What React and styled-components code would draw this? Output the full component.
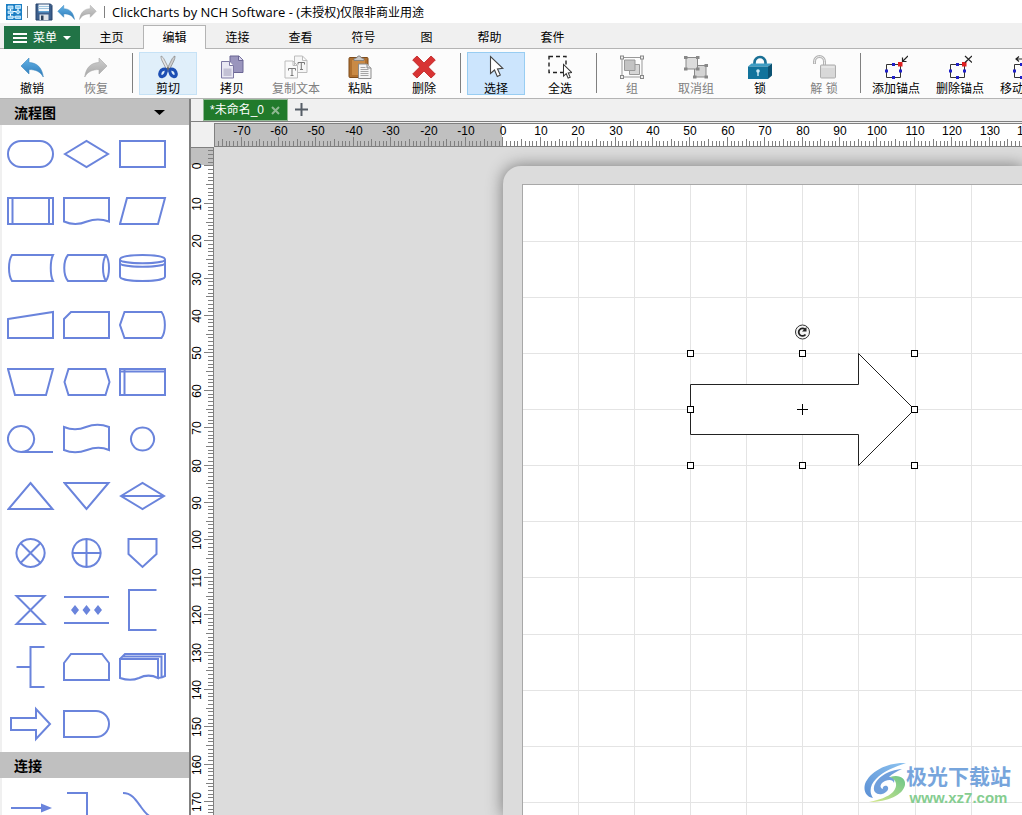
import React, { useEffect, useState } from "react";
import styled, { createGlobalStyle } from "styled-components";

const GlobalStyle = createGlobalStyle`
  *, *::before, *::after { box-sizing: border-box; }
  html, body { margin: 0; height: 100%; }
  body {
    overflow: hidden;
    background: #f0f0f0;
    color: #000;
    font-family: "Liberation Sans", "Noto Sans CJK SC", sans-serif;
    font-size: 12px;
  }
  button { font: inherit; color: inherit; padding: 0; margin: 0; border: 0; background: none; }
  svg { display: block; flex: none; }
`;

const Window = styled.div`
  display: flex;
  flex-direction: column;
  height: 100vh;
  overflow: hidden;
`;

/* ---------- title bar ---------- */

const TitleBar = styled.header`
  display: flex;
  align-items: center;
  height: 23px;
  padding-left: 6px;
  background: #fff;
  flex: none;
`;

const QuickButton = styled.button`
  display: flex;
  margin-right: ${(p) => p.$gap}px;
`;

const TitleDivider = styled.span`
  width: 1px;
  height: 12px;
  margin-right: 7px;
  margin-left: ${(p) => p.$before}px;
  background: #808080;
`;

const Title = styled.h1`
  margin: 2px 0 0;
  font: 400 13px/20px "Open Sans", "Noto Sans CJK SC", sans-serif;
  white-space: nowrap;
`;

const TitleNote = styled.span`
  font-size: 12px;
`;

/* ---------- ribbon tabs ---------- */

const TabStrip = styled.nav`
  display: flex;
  align-items: flex-end;
  height: 26px;
  padding-left: 4px;
  border-bottom: 1px solid #b4b4b4;
  background: #f0f0f0;
  flex: none;
`;

const MenuButton = styled.button`
  display: flex;
  align-items: center;
  gap: 6px;
  width: 76px;
  height: 23px;
  padding-left: 9px;
  margin-bottom: -1px;
  background: #217346;
  color: #fff;
  line-height: 22px;
`;

const RibbonTab = styled.button`
  width: 63px;
  height: 24px;
  line-height: 22px;
  margin-bottom: -1px;
  border: 1px solid transparent;
  border-bottom: 0;
  ${(p) => p.$active && `background: #fcfcfc; border-color: #b4b4b4;`}
`;

/* ---------- ribbon ---------- */

const Ribbon = styled.div`
  display: flex;
  height: 50px;
  padding-top: 3px;
  border-bottom: 1px solid #b4b4b4;
  background: #fcfcfc;
  overflow: hidden;
  flex: none;
`;

const tones = {
  plain: "background: transparent; border-color: transparent;",
  hover: "background: #e0effa; border-color: #c6e2f6;",
  pressed: "background: #cce5fd; border-color: #98cdf2;",
};

const ToolButton = styled.button`
  display: flex;
  flex-direction: column;
  align-items: center;
  flex: none;
  width: 58px;
  height: 43px;
  margin: 0 3px;
  padding-top: 2px;
  border: 1px solid;
  ${(p) => tones[p.$tone || "plain"]}
  color: #000;
  &:disabled { color: #808080; }
`;

const ToolLabel = styled.span`
  margin-top: 2px;
  line-height: 16px;
  white-space: nowrap;
`;

const ToolDivider = styled.span`
  flex: none;
  width: 1px;
  height: 40px;
  margin: 1px 3px 0 4px;
  background: #808080;
`;

/* ---------- body ---------- */

const Body = styled.div`
  display: flex;
  flex: 1;
  min-height: 0;
`;

const Sidebar = styled.aside`
  flex: none;
  width: 191px;
  border-right: 2px solid #808080;
  background: #fff;
  overflow: hidden;
`;

const SectionHeader = styled.h2`
  display: flex;
  align-items: center;
  justify-content: space-between;
  height: 26px;
  margin: 0;
  padding: 0 24px 0 14px;
  background: #c0c0c0;
  font: 700 14px/26px "Noto Sans CJK SC", sans-serif;
`;

const ShapeGrid = styled.div`
  display: grid;
  grid-template-columns: repeat(3, 48px);
  grid-auto-rows: 48px;
  gap: 9px 8px;
  padding: 5px 0 4px 5px;
  border-left: 2px solid #f0f0f0;
`;

const ShapeButton = styled.button`
  display: block;
  width: 48px;
  height: 48px;
  & path {
    fill: none;
    stroke: #6a84dc;
    stroke-width: 2;
  }
  & .solid { fill: #6a84dc; stroke: none; }
`;

const Main = styled.main`
  display: flex;
  flex-direction: column;
  flex: 1;
  min-width: 0;
`;

const DocStrip = styled.div`
  display: flex;
  align-items: flex-end;
  height: 23px;
  padding-left: 12px;
  margin-bottom: 1px;
  border-bottom: 1px solid #808080;
  flex: none;
`;

const DocTab = styled.div`
  display: flex;
  align-items: center;
  justify-content: space-between;
  width: 85px;
  height: 22px;
  padding: 0 7px 0 6px;
  border: 1px solid #8fb892;
  background: #217a2b;
  color: #fff;
  line-height: 20px;
  white-space: nowrap;
`;

const AddTab = styled.button`
  display: flex;
  margin: 0 0 5px 7px;
`;

const Desk = styled.div`
  display: grid;
  grid-template-columns: 23px minmax(0, 1fr);
  grid-template-rows: 24px minmax(0, 1fr);
  flex: 1;
  min-height: 0;
`;

const RulerBox = styled.div`
  overflow: hidden;
  background: #fff;
  & text {
    font: 12px "Liberation Sans", sans-serif;
    text-anchor: middle;
  }
`;

const Workspace = styled.div`
  display: flex;
  padding: 19px 0 0 289px;
  background: #dcdcdc;
  overflow: hidden;
`;

const PageFrame = styled.div`
  display: flex;
  flex: 1;
  min-width: 0;
  padding: 18px 0 0 19px;
  border-radius: 18px 0 0 0;
  background: #dcdcdc;
  box-shadow: 0 0 16px 1px #808080;
`;

const Paper = styled.div`
  flex: 1;
  min-width: 0;
  border: solid #a8a8a8;
  border-width: 1px 0 0 1px;
  background: #fff;
  overflow: hidden;
`;

const Watermark = styled.a`
  position: absolute;
  right: 11px;
  bottom: 9px;
  display: flex;
  align-items: center;
  text-decoration: none;
`;

const WatermarkText = styled.span`
  display: flex;
  flex-direction: column;
  align-items: center;
`;

const WatermarkName = styled.span`
  font: 700 21px/30px "Noto Sans CJK SC", sans-serif;
  color: #77a5dc;
`;

const WatermarkSite = styled.span`
  font: 700 15px/16px "Liberation Sans", sans-serif;
  color: #85cd90;
`;

/* ---------- icons ---------- */

const UndoIcon = ({ size = 24, gray }) => (
  <svg width={size} height={size} viewBox="0 0 24 24">
    <defs>
      <linearGradient id={gray ? "ug" : "ub"} x1="0" y1="0" x2="0" y2="1">
        <stop offset="0" stopColor={gray ? "#cfcfcf" : "#62b2e6"} />
        <stop offset="1" stopColor={gray ? "#a6a6a6" : "#2c79b8"} />
      </linearGradient>
    </defs>
    <path
      transform={gray ? "translate(24 0) scale(-1 1)" : undefined}
      fill={gray ? "url(#ug)" : "url(#ub)"}
      stroke={gray ? "#a8a8a8" : "#3d86bd"}
      strokeWidth="0.6"
      d="M1 11 9 3v4.500c8 .3 13 5 14.300 14.500C20 16.500 16 14.600 9 14.500V19z"
    />
  </svg>
);

const AppIcon = () => (
  <svg width="16" height="16" viewBox="0 0 16 16">
    <rect width="16" height="16" fill="#1c7fc4" />
    <path d="M4.500 4v9M4.500 7.500h7M12 3v7M4.500 13h5" stroke="#fff" fill="none" />
    <path d="M2 2h5v3H2zM9.500 1.500h5v3h-5zM2 7h5v2.500H2zM12 6l2.500 2L12 10 9.500 8zM2 12h5v2.500H2zM9.500 12h5v2.500h-5z" fill="#8fd0f5" stroke="#e8f6ff" strokeWidth="0.7" />
  </svg>
);

const SaveIcon = () => (
  <svg width="18" height="18" viewBox="0 0 18 18">
    <path d="M1 1h14.500L17 2.500V17H1z" fill="#3d5f8c" stroke="#27436b" />
    <path d="M3.500 1.500h10.500V8H3.500z" fill="#f4f7fa" />
    <path d="M3.500 3.500H14M3.500 5.500H14" stroke="#9dc4de" />
    <path d="M3.500 8H14v1.500H3.500z" fill="#5e9fd0" />
    <path d="M4.500 11.500h9V17h-9z" fill="#dfe3e8" />
    <path d="M6 12.500h2.500V17H6z" fill="#2c3f59" />
  </svg>
);

const CutIcon = () => (
  <svg width="24" height="24" viewBox="0 0 24 24">
    <path d="M5 1c2 1 2.500 2 3.500 4l5 10-2 1.500L6.200 6C5.300 4 5 3 5 1z" fill="#e4e4e4" stroke="#909090" strokeWidth="0.8" />
    <path d="M19 1c-2 1-2.500 2-3.500 4l-5 10 2 1.500L17.800 6c.9-2 1.200-3 1.200-5z" fill="#cfcfcf" stroke="#8a8a8a" strokeWidth="0.8" />
    <path d="M10.300 14.600c-1.800-.9-4.800-.4-6 2.300-1.200 2.800-.2 5 1.800 4.800 2.500-.3 4.400-3.600 4.200-7.100zM13.700 14.600c1.800-.9 4.800-.4 6 2.300 1.200 2.800.2 5-1.800 4.800-2.500-.3-4.400-3.600-4.200-7.100z" fill="none" stroke="#1d4fb4" strokeWidth="3.200" />
    <circle cx="12" cy="13.500" r="1.300" fill="#666" />
  </svg>
);

const CopyIcon = () => (
  <svg width="24" height="24" viewBox="0 0 24 24">
    <path d="M10 1h9l4 4v12.500H10z" fill="#9a95bd" stroke="#6b6694" />
    <path d="M18.500 1v4.500H23" fill="#dcdaf0" stroke="#6b6694" />
    <path d="M1.500 6.500h8l4 4V23h-12z" fill="#e9e8f3" stroke="#7c78a3" />
    <path d="M9.500 6.500v4h4" fill="#fff" stroke="#7c78a3" />
    <path d="M3.500 13.500h8V21h-8z" fill="#c3c1d5" />
  </svg>
);

const CopyTextIcon = () => (
  <svg width="24" height="24" viewBox="0 0 24 24">
    <path d="M10.500 1h8l4.500 4.500v12H10.500zM18.500 1v4.500H23" fill="#f6f6f6" stroke="#bcbcbc" />
    <path d="M1 6h8l4.500 4.500V23H1zM9 6v4.500h4.500" fill="#fafafa" stroke="#bcbcbc" />
    <path d="M4.500 15.500v-2h7v2M8 13.500v7M6.500 20.500h3" stroke="#777" fill="none" />
    <path d="M14 9.500v-2h6.500v2M17.300 7.500v7M16 14.500h3" stroke="#777" fill="none" />
  </svg>
);

const PasteIcon = () => (
  <svg width="24" height="24" viewBox="0 0 24 24">
    <rect x="1" y="2.500" width="19" height="20" rx="1" fill="#b0702f" stroke="#7d4b1b" />
    <path d="M4 5h13v15H4z" fill="#c98a45" />
    <path d="M6 5.500V3.500L8.500 3 10 1h2l1.500 2 2.500.5v2z" fill="#c9c9c9" stroke="#7b7b7b" strokeWidth="0.8" />
    <path d="M10.500 9h8.500l4 4v10.500H10.500z" fill="#f5f5f5" stroke="#8b8b8b" />
    <path d="M19 9v4h4" fill="#ddd" stroke="#8b8b8b" />
    <path d="M12.500 12.500h5M12.500 14.500h8M12.500 16.500h8M12.500 18.500h8M12.500 20.500h8" stroke="#a5a5a5" />
  </svg>
);

const DeleteIcon = () => (
  <svg width="24" height="24" viewBox="0 0 24 24">
    <path d="M5 1 12 8 19 1 23.300 5 16.300 12 23.300 19 19 23 12 16 5 23 .700 19 7.700 12 .700 5z" fill="#d83434" stroke="#bd2020" strokeWidth="0.8" strokeLinejoin="round" />
  </svg>
);

const POINTER = "M0 0v17l4-3.500 2.800 6.500 3-1.400-2.800-6.200 5.300-.6z";

const SelectIcon = () => (
  <svg width="24" height="24" viewBox="0 0 24 24">
    <path transform="translate(6.500 1.500)" d={POINTER} fill="#fff" stroke="#444" strokeWidth="1.100" />
  </svg>
);

const SelectAllIcon = () => (
  <svg width="24" height="24" viewBox="0 0 24 24">
    <path d="M1 1.500h17v16H1z" fill="none" stroke="#222" strokeWidth="1.400" strokeDasharray="4 3" />
    <g transform="translate(15.500 9.500) scale(.68)">
      <path d={POINTER} fill="#fff" stroke="#333" strokeWidth="1.500" />
    </g>
  </svg>
);

const GroupIcon = () => (
  <svg width="24" height="24" viewBox="0 0 24 24">
    <path d="M2 2.500h20v19.500H2z" fill="none" stroke="#999" />
    <path d="M9.500 9.500h10v10h-10z" fill="#d6d6d6" stroke="#999" />
    <path d="M4.500 5h10.500v10.500H4.500z" fill="#c3c3c3" stroke="#999" />
    <g fill="#eee" stroke="#888">
      <rect x=".5" y="1" width="3" height="3" /><rect x="20.500" y="1" width="3" height="3" />
      <rect x=".5" y="20.500" width="3" height="3" /><rect x="20.500" y="20.500" width="3" height="3" />
    </g>
  </svg>
);

const UngroupIcon = () => (
  <svg width="24" height="24" viewBox="0 0 24 24">
    <path d="M10.500 10.500h11.500V22H10.500z" fill="#d4d4d4" stroke="#888" />
    <path d="M2 2.500h11.500V14H2z" fill="#dcdcdc" stroke="#888" />
    <path d="M0 1h3.500v3H0zM12 1h3.500v3H12zM0 12.500h3.500v3H0zM12 12.500h3.500v3H12zM20.500 9H24v3h-3.500zM9 20.500h3.500v3H9zM20.500 20.500H24v3h-3.500z" fill="#888" />
  </svg>
);

const LockIcon = () => (
  <svg width="26" height="24" viewBox="0 0 26 24">
    <path d="M7.500 10V7.500a5.500 5.500 0 0 1 11 0V10" fill="none" stroke="#1a7095" strokeWidth="2.700" />
    <path d="M1 11.500 4.500 8.500H25l-4 3z" fill="#3e9dc4" />
    <path d="M21 11.500l4-3v12L21 24z" fill="#0b5273" />
    <path d="M1 11.500h20V24H1z" fill="#11739c" />
    <circle cx="11" cy="16" r="1.800" fill="#cdeaf6" /><path d="M10.300 16h1.400v5h-1.400z" fill="#cdeaf6" />
  </svg>
);

const UnlockIcon = () => (
  <svg width="24" height="24" viewBox="0 0 24 24">
    <path d="M2.500 9V6.500a5 5 0 0 1 10 0V10" fill="none" stroke="#b3b3b3" strokeWidth="3" />
    <path d="M2.500 8.500v-2a5 5 0 0 1 10 0V10" fill="none" stroke="#ececec" />
    <rect x="8.500" y="10" width="15" height="13" rx="1" fill="#d8d8d8" stroke="#adadad" />
    <path d="M9.500 12h13" stroke="#f2f2f2" />
  </svg>
);

const AnchorIcon = ({ mark }) => (
  <svg width="24" height="24" viewBox="0 0 24 24">
    <path d="M2.500 9.500h14v13h-14z" fill="none" stroke="#333" />
    <path d="M8 8h3v3H8zM8 21h3v3H8zM1 14.500h3v3H1zM15 14.500h3v3h-3z" fill="#2020c8" />
    <path d="M14 7h4.500v4.500H14z" fill="#e02020" />
    <path d={mark} fill="none" stroke="#222" strokeWidth="1.200" />
  </svg>
);

const tools = [
  { label: "撤销", icon: <UndoIcon /> },
  { label: "恢复", icon: <UndoIcon gray />, disabled: true },
  null,
  { label: "剪切", icon: <CutIcon />, tone: "hover" },
  { label: "拷贝", icon: <CopyIcon /> },
  { label: "复制文本", icon: <CopyTextIcon />, disabled: true },
  { label: "粘贴", icon: <PasteIcon /> },
  { label: "删除", icon: <DeleteIcon /> },
  null,
  { label: "选择", icon: <SelectIcon />, tone: "pressed" },
  { label: "全选", icon: <SelectAllIcon /> },
  null,
  { label: "组", icon: <GroupIcon />, disabled: true },
  { label: "取消组", icon: <UngroupIcon />, disabled: true },
  { label: "锁", icon: <LockIcon /> },
  { label: "解 锁", icon: <UnlockIcon />, disabled: true },
  null,
  { label: "添加锚点", icon: <AnchorIcon mark="M24 1 18.500 6.500M18.500 2.500v4h4" /> },
  { label: "删除锚点", icon: <AnchorIcon mark="M17 1l7 6.500M24 1l-7 6.500" /> },
  { label: "移动锚点", icon: <AnchorIcon mark="M4 4h16M7 1.500 4 4l3 2.500M17 1.500 20 4l-3 2.500" /> },
];

/* Each stencil is drawn in a 48 by 48 cell. */
const DIAMONDS = "M8 24l4-5 4 5-4 5zM19.500 24l4-5 4 5-4 5zM31 24l4-5 4 5-4 5z";
const flowShapes = [
  { d: "M14 11h19a13 13 0 0 1 0 26H14a13 13 0 0 1 0-26z" },
  { d: "M2 24 23.500 11 45 24 23.500 37z" },
  { d: "M1 11h45v26H1z" },
  { d: "M1 11h45v26H1zM5.500 11v26M42 11v26" },
  { d: "M1 11h45v23.500c-7-2.500-14-3-22 0-8 3.300-15 3.500-23 0z" },
  { d: "M8 11h38l-7 26H1z" },
  { d: "M5 11h41c-3 6-3 20 0 26H5c-4-6-4-20 0-26z" },
  { d: "M5 11h38c4 6 4 20 0 26H5c-5-6-5-20 0-26zM43 11c-4 6-4 20 0 26" },
  { d: "M1 15.500c0-6 45-6 45 0v17c0 6-45 6-45 0zM1 15.500c0 5 45 5 45 0M1 19c0 5 45 5 45 0" },
  { d: "M1 18 46 11v26H1z" },
  { d: "M8 11h38v26H1V18z" },
  { d: "M5.500 11h37c4.500 6 4.500 20 0 26h-37L1 24z" },
  { d: "M1 11h45l-7 26H8z" },
  { d: "M5.500 11h37l4 13-4 13h-37l-4-13z" },
  { d: "M1 11h45v26H1zM1 13.500h45M5.500 11v26" },
  { d: "M14 11a13 13 0 1 0 .1 0zM14 37h32" },
  { d: "M1 12c7 3 15 3 22 0 8-3 15-3 23 0v23c-7-3-14-3-22 0-8 3-16 3-23 0z" },
  { d: "M23.500 12.500a11.500 11.500 0 1 0 .1 0z" },
  { d: "M23.500 11 45.500 37h-44z" },
  { d: "M1.500 11h44l-22 26z" },
  { d: "M2 24 23.500 11 45 24 23.500 37zM2 24h43" },
  { d: "M23.500 10a14 14 0 1 0 .1 0zM13.500 14l20 20M33.500 14l-20 20" },
  { d: "M23.500 10a14 14 0 1 0 .1 0zM23.500 10v28M9.500 24h28" },
  { d: "M9.500 10h28v15l-14 13-14-13z" },
  { d: "M9.500 10h28l-28 28h28z" },
  { d: "M1 11h45M1 37h45", solid: DIAMONDS },
  { d: "M37.500 4H10v40h27.500" },
  { d: "M37.500 4h-14v40h14M9.500 24h14" },
  { d: "M8 11h31l7 9v17H1V20z" },
  { d: "M1 16h38v19c-6-3-13-3-19 0-7 3-13 2-19 0zM1 16l5-5h40v22l-3.500 1.500M3 13.500h39.500v21L39 35" },
  { d: "M4 18h25V9l14 15-14 15v-9H4z" },
  { d: "M1 11h32a13 13 0 0 1 0 26H1z" },
];
const linkShapes = [
  { d: "M4 25h34", solid: "M34 20.500 45 25l-11 4.500z" },
  { d: "M4 10h20v30h16" },
  { d: "M4 10c9 0 13 7 18 14s9 12 20 12" },
];

const Shapes = ({ items, name }) => (
  <ShapeGrid>
    {items.map((s, i) => (
      <ShapeButton key={i} type="button" aria-label={`${name} ${i + 1}`}>
        <svg width="48" height="48" viewBox="0 0 48 48">
          <path d={s.d} />
          {s.solid && <path className="solid" d={s.solid} />}
        </svg>
      </ShapeButton>
    ))}
  </ShapeGrid>
);

/* ---------- rulers and drawing ---------- */

const UNIT = 3.74;
const range = (from, to) =>
  Array.from({ length: Math.max(0, to - from + 1) }, (_, i) => from + i);
const tickLength = (n) => (n % 10 === 0 ? 9 : n % 5 === 0 ? 7 : 5);

const useWindowSize = () => {
  const read = () => ({ width: window.innerWidth, height: window.innerHeight });
  const [size, setSize] = useState(read);
  useEffect(() => {
    const update = () => setSize(read());
    window.addEventListener("resize", update);
    return () => window.removeEventListener("resize", update);
  }, []);
  return size;
};

const HorizontalRuler = ({ last }) => {
  const zero = 288;
  const at = (n) => Math.round(zero + 0.4 + n * UNIT);
  const units = range(-76, last);
  return (
    <svg width="100%" height="24">
      <rect width={zero} height="24" fill="#c0c0c0" />
      <g fill="#808080">
        {units.map((n) => (
          <rect key={n} x={at(n)} y={23 - tickLength(n)} width="1" height={tickLength(n)} />
        ))}
        <rect width="100%" height="1" />
        <rect width="1" height="24" />
        <rect y="23" width="100%" height="1" />
      </g>
      {units.filter((n) => n % 10 === 0).map((n) => (
        <text key={n} x={at(n) + 1} y="12">{n}</text>
      ))}
    </svg>
  );
};

const VerticalRuler = ({ last }) => {
  const zero = 18;
  const at = (n) => Math.round(zero + 0.4 + n * UNIT);
  const units = range(-4, last);
  return (
    <svg width="23" height="100%">
      <rect width="23" height={zero} fill="#c0c0c0" />
      <g fill="#808080">
        {units.map((n) => (
          <rect key={n} x={22 - tickLength(n)} y={at(n)} width={tickLength(n)} height="1" />
        ))}
        <rect width="23" height="1" />
        <rect x="22" width="1" height="100%" />
      </g>
      {units.filter((n) => n % 10 === 0).map((n) => (
        <text key={n} transform={`translate(10 ${at(n) + 1}) rotate(-90)`}>{n}</text>
      ))}
    </svg>
  );
};

const GRID = 56.1;
const handles = [
  [167, 168], [279, 168], [391, 168],
  [167, 224], [391, 224],
  [167, 280], [279, 280], [391, 280],
];

const Drawing = () => (
  <svg width="100%" height="100%">
    <g fill="#e4e4e4">
      {range(1, 40).map((k) => (
        <rect key={`v${k}`} x={Math.round(k * GRID - 1.2)} y="0" width="1" height="100%" />
      ))}
      {range(1, 40).map((k) => (
        <rect key={`h${k}`} x="0" y={Math.round(k * GRID - 0.3)} width="100%" height="1" />
      ))}
    </g>
    <path d="M167.500 199.500h168v-31l56 56-56 56v-31h-168z" fill="#fff" stroke="#222" />
    <path d="M274 224.500h11M279.500 219v11" stroke="#000" />
    <g fill="#fff" stroke="#000">
      {handles.map(([x, y]) => (
        <rect key={`${x}-${y}`} x={x - 2.5} y={y - 2.5} width="6" height="6" />
      ))}
    </g>
    <circle cx="279.500" cy="147" r="7" fill="#f4f4f4" stroke="#333" />
    <path d="M282.500 149.500a3.800 3.800 0 1 1-.5-5.200" fill="none" stroke="#222" strokeWidth="1.800" />
    <path d="M283.500 142v4.500H279z" fill="#222" />
  </svg>
);

const WatermarkLogo = () => (
  <svg width="42" height="42" viewBox="0 0 42 42">
    <defs>
      <linearGradient id="wb" x1="0" y1="1" x2="1" y2="0">
        <stop offset="0" stopColor="#5b8fd4" /><stop offset="1" stopColor="#8cc3f0" />
      </linearGradient>
      <linearGradient id="wg" x1="0" y1="1" x2="1" y2="0">
        <stop offset="0" stopColor="#d6e88a" /><stop offset="1" stopColor="#6cc489" />
      </linearGradient>
    </defs>
    <path d="M42 1C24 0 6 9 1 22c-2 8 2 13 8 14-4-6-3-13 3-19C19 9 31 5 42 1z" fill="url(#wb)" />
    <path d="M38 7C24 8 12 16 10 25c-1 5 3 8 8 7 5-1 8-6 5-8-2-1-5 1-4 3-4-1-3-6 2-8 5-2 8-1 9 2 1-4-1-6-5-6 3-3 8-6 13-8z" fill="#6f9fdc" />
    <path d="M26 15c9-3 16 1 15 8-2 10-17 17-36 17 10-2 19-5 24-10 5-6 4-12-3-15z" fill="url(#wg)" />
  </svg>
);

const tabs = ["主页", "编辑", "连接", "查看", "符号", "图", "帮助", "套件"];

export default function App() {
  const { width, height } = useWindowSize();
  return (
    <Window>
      <GlobalStyle />
      <TitleBar>
        <AppIcon />
        <TitleDivider $before={5} />
        <QuickButton type="button" aria-label="保存" $gap={4}><SaveIcon /></QuickButton>
        <QuickButton type="button" aria-label="撤销" $gap={4}><UndoIcon size={18} /></QuickButton>
        <QuickButton type="button" aria-label="恢复" $gap={0} disabled><UndoIcon size={18} gray /></QuickButton>
        <TitleDivider $before={7} />
        <Title>
          ClickCharts by NCH Software - (<TitleNote>未授权</TitleNote>)<TitleNote>仅限非商业用途</TitleNote>
        </Title>
      </TitleBar>

      <TabStrip>
        <MenuButton type="button">
          <svg width="14" height="12"><path d="M0 1h14v2H0zM0 5h14v2H0zM0 9h14v2H0z" fill="#fff" /></svg>
          菜单
          <svg width="8" height="4"><path d="M0 0h8L4 4z" fill="#fff" /></svg>
        </MenuButton>
        {tabs.map((t) => (
          <RibbonTab key={t} type="button" $active={t === "编辑"}>{t}</RibbonTab>
        ))}
      </TabStrip>

      <Ribbon>
        {tools.map((t, i) =>
          t ? (
            <ToolButton key={t.label} type="button" disabled={t.disabled} $tone={t.tone}>
              {t.icon}
              <ToolLabel>{t.label}</ToolLabel>
            </ToolButton>
          ) : (
            <ToolDivider key={i} />
          )
        )}
      </Ribbon>

      <Body>
        <Sidebar>
          <SectionHeader>
            流程图
            <svg width="11" height="5"><path d="M0 0h11L5.500 5z" /></svg>
          </SectionHeader>
          <Shapes items={flowShapes} name="流程图" />
          <SectionHeader>连接</SectionHeader>
          <Shapes items={linkShapes} name="连接" />
        </Sidebar>

        <Main>
          <DocStrip>
            <DocTab>
              *未命名_0
              <button type="button" aria-label="关闭">
                <svg width="9" height="9"><path d="M1 1l7 7M8 1 1 8" stroke="#8fb892" strokeWidth="2" /></svg>
              </button>
            </DocTab>
            <AddTab type="button" aria-label="新建">
              <svg width="13" height="13"><path d="M6.500 0v13M0 6.500h13" stroke="#555d66" strokeWidth="2" /></svg>
            </AddTab>
          </DocStrip>
          <Desk>
            <span />
            <RulerBox><HorizontalRuler last={Math.ceil((width - 490) / UNIT)} /></RulerBox>
            <RulerBox><VerticalRuler last={Math.ceil((height - 165) / UNIT)} /></RulerBox>
            <Workspace>
              <PageFrame>
                <Paper><Drawing /></Paper>
              </PageFrame>
            </Workspace>
          </Desk>
        </Main>
      </Body>

      <Watermark href="#">
        <WatermarkLogo />
        <WatermarkText>
          <WatermarkName>极光下载站</WatermarkName>
          <WatermarkSite>www.xz7.com</WatermarkSite>
        </WatermarkText>
      </Watermark>
    </Window>
  );
}
